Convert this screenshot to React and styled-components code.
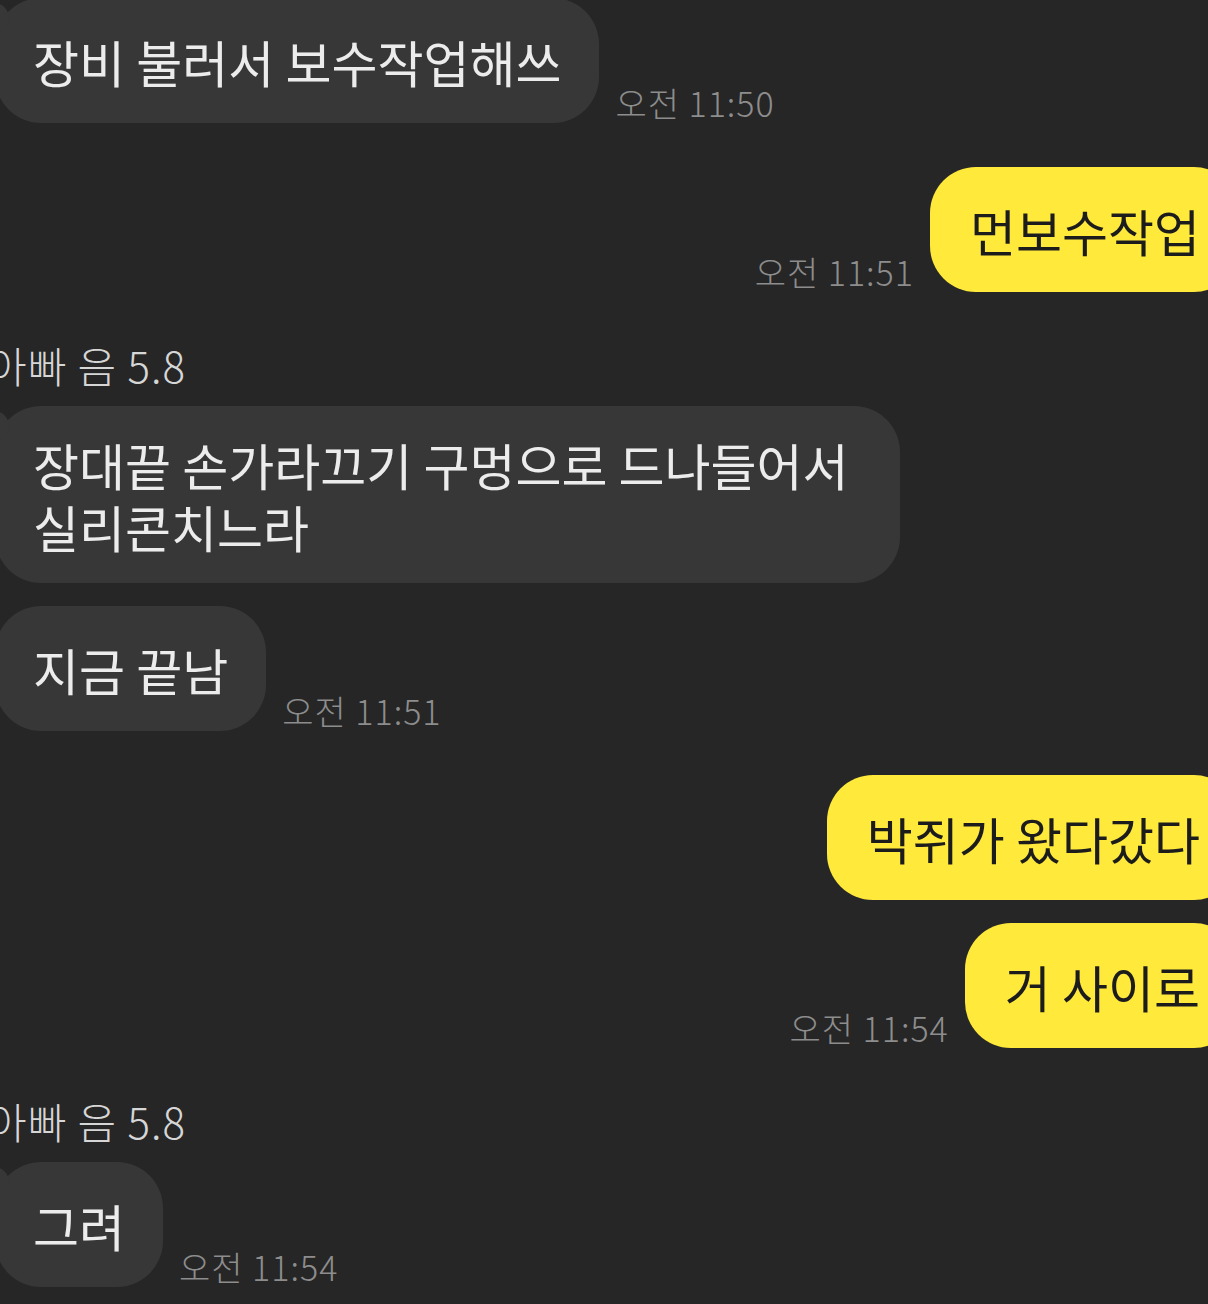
import React from "react";
import styled, { createGlobalStyle, css } from "styled-components";

const GlobalStyle = createGlobalStyle`
  html, body {
    margin: 0;
    padding: 0;
    background: #262626;
  }
  body {
    width: 1208px;
    height: 1304px;
    overflow: hidden;
    font-family: "Noto Sans CJK KR", "Noto Sans", sans-serif;
  }
`;

const Chat = styled.main`
  display: flex;
  flex-direction: column;
  margin-top: -2px;
`;

const Row = styled.div`
  display: flex;
  align-items: flex-end;
  gap: 16px;
  margin-top: ${({ $gap }) => $gap}px;
  ${({ $side }) =>
    $side === "right"
      ? css`
          flex-direction: row-reverse;
          margin-right: -32px;
        `
      : css`
          margin-left: -5px;
        `}
`;

const Bubble = styled.div`
  position: relative;
  box-sizing: border-box;
  display: flex;
  align-items: center;
  min-height: 125px;
  max-width: 905px;
  padding: 26.5px 38px;
  border-radius: 46px;
  font-size: 50px;
  line-height: 62px;
  letter-spacing: 0;
  word-break: keep-all;
  background: ${({ $side }) => ($side === "right" ? "#ffe93b" : "#373737")};
  color: ${({ $side }) => ($side === "right" ? "#1c1c1c" : "#ececec")};
  ${({ $side }) => $side === "right" && css`padding: 26.5px 40px;`}

  ${({ $tail }) =>
    $tail &&
    css`
      &::before {
        content: "";
        position: absolute;
        left: -16px;
        top: 5px;
        width: 30px;
        height: 30px;
        border-radius: 50%;
        background: #373737;
      }
    `}
`;

const Time = styled.span`
  flex-shrink: 0;
  margin-bottom: 3px;
  font-size: 34px;
  font-weight: 300;
  line-height: 34px;
  letter-spacing: 1px;
  color: #8d8d8d;
  white-space: nowrap;
`;

const Name = styled.div`
  margin-top: ${({ $gap }) => $gap}px;
  margin-left: -12px;
  font-size: 42px;
  font-weight: 300;
  line-height: 46px;
  letter-spacing: 1px;
  color: #d6d6d6;
`;

const items = [
  { side: "left", text: "장비 불러서 보수작업해쓰", time: "오전 11:50", gap: 0, tail: true },
  { side: "right", text: "먼보수작업", time: "오전 11:51", gap: 44 },
  { name: "아빠 음 5.8", gap: 50 },
  { side: "left", text: "장대끝 손가라끄기 구멍으로 드나들어서 실리콘치느라", gap: 18, tail: true },
  { side: "left", text: "지금 끝남", time: "오전 11:51", gap: 23 },
  { side: "right", text: "박쥐가 왔다갔다", gap: 44 },
  { side: "right", text: "거 사이로", time: "오전 11:54", gap: 23 },
  { name: "아빠 음 5.8", gap: 50 },
  { side: "left", text: "그려", time: "오전 11:54", gap: 18, tail: true },
];

const App = () => {
  return (
    <>
      <GlobalStyle />
      <Chat>
        {items.map((item, i) =>
          item.name ? (
            <Name key={i} $gap={item.gap}>
              {item.name}
            </Name>
          ) : (
            <Row key={i} $side={item.side} $gap={item.gap}>
              <Bubble $side={item.side} $tail={item.tail}>
                {item.text}
              </Bubble>
              {item.time && <Time>{item.time}</Time>}
            </Row>
          )
        )}
      </Chat>
    </>
  );
};

export default App;
